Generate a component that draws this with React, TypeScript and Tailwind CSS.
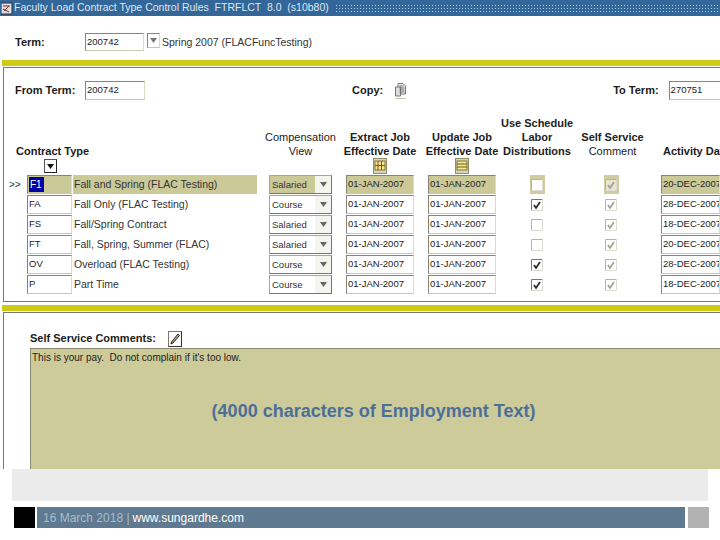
const rows = [
  { code: 'F1', desc: 'Fall and Spring (FLAC Testing)', view: 'Salaried', labor: false, activity: '20-DEC-2007' },
  { code: 'FA', desc: 'Fall Only (FLAC Testing)', view: 'Course', labor: true, activity: '28-DEC-2007' },
  { code: 'FS', desc: 'Fall/Spring Contract', view: 'Salaried', labor: false, activity: '18-DEC-2007' },
  { code: 'FT', desc: 'Fall, Spring, Summer (FLAC)', view: 'Salaried', labor: false, activity: '20-DEC-2007' },
  { code: 'OV', desc: 'Overload (FLAC Testing)', view: 'Course', labor: true, activity: '28-DEC-2007' },
  { code: 'P', desc: 'Part Time', view: 'Course', labor: true, activity: '18-DEC-2007' },
];

const gridCols = 'grid grid-cols-[23px_45px_197px_77px_82px_82px_54px_94px_62px]';
const bevel = 'border border-t-[#85857a] border-l-[#85857a] border-r-[#dddbc4] border-b-[#c9c7ac]';

const Triangle = ({ className }: { className: string }) => (
  <svg width="7" height="5" viewBox="0 0 7 5" className={className}>
    <path d="M0 0h7L3.5 5z" fill="currentColor" />
  </svg>
);

const Field = ({ value, className }: { value: string; className: string }) => (
  <div className={`flex shrink-0 items-center overflow-hidden whitespace-nowrap bg-white pl-px text-[9.5px] text-[#222] ${bevel} ${className}`}>{value}</div>
);

const CalendarIcon = ({ lined }: { lined?: boolean }) => (
  <svg width="14" height="16" viewBox="0 0 14 16">
    <rect x="0.5" y="0.5" width="13" height="15" fill="#d8d6b4" stroke="#8f8d6a" />
    <rect x="2" y="3" width="10" height="9" fill="#f4e58a" stroke="#6b5a20" strokeWidth="0.8" />
    {lined ? (
      <path d="M2 6h10M2 9h10" stroke="#6b5a20" />
    ) : (
      <path d="M5 3v9M8.500 3v9M2 7.500h10" stroke="#b23a20" />
    )}
  </svg>
);

const CheckBox = ({ checked, disabled, active }: { checked: boolean; disabled?: boolean; active?: boolean }) => (
  <div className={`flex h-full w-[15px] items-center justify-center ${active ? 'bg-[#cfcd9f]' : ''}`}>
    <svg width="12" height="12" viewBox="0 0 12 12">
      <path d="M0.500 11.500V0.500H11.500" fill="none" stroke={disabled || !checked ? '#b4b4a8' : '#77776c'} />
      <path d="M11.500 0.500V11.500H0.500" fill="none" stroke="#dddbd0" />
      {active && <rect x="1" y="1" width="10" height="10" fill={disabled ? '#e6e5d0' : '#fff'} />}
      {checked && <path d="M3 6l2 3 4-6" fill="none" stroke={disabled ? '#a3a396' : '#2c2c2c'} strokeWidth="1.800" />}
    </svg>
  </div>
);

const Row = ({ row, active }: { row: (typeof rows)[number]; active: boolean }) => {
  const fill = active ? 'bg-[#cbc998]' : 'bg-white';
  return (
    <div className={`${gridCols} h-[19px] grid-rows-[19px] items-stretch`}>
      <div className="pl-[5px] text-[10px] leading-[19px] text-[#333]">{active ? '>>' : ''}</div>
      {active ? (
        <div className={`flex items-center pl-px text-[10px] ${bevel} ${fill}`}>
          <span className="bg-[#0000a8] pl-px pr-[2px] text-white">{row.code}</span>
        </div>
      ) : (
        <Field value={row.code} className="" />
      )}
      <div className={`ml-px mr-[12px] whitespace-nowrap pl-px text-[10.5px] leading-[19px] text-[#333] ${active ? 'bg-[#cbc998]' : ''}`}>{row.desc}</div>
      <div className={`flex w-[63px] items-stretch border border-[#77776c] border-t-[#a5a598] border-l-[#a5a598] ${fill}`}>
        <span className="flex-1 pl-[2px] text-[9.5px] leading-[17px] text-[#333]">{row.view}</span>
        <span className="flex w-[16px] items-center justify-center bg-[#f5f5ef] text-[#666]">
          <Triangle className="" />
        </span>
      </div>
      <Field value="01-JAN-2007" className={`w-[68px] ${active ? 'bg-[#cbc998]!' : ''}`} />
      <Field value="01-JAN-2007" className={`w-[68px] ${active ? 'bg-[#cbc998]!' : ''}`} />
      <div className="flex justify-center">
        <CheckBox checked={row.labor} active={active} />
      </div>
      <div className="flex justify-center">
        <CheckBox checked disabled active={active} />
      </div>
      <Field value={row.activity} className={`ml-[3px] ${active ? 'bg-[#cbc998]!' : ''}`} />
    </div>
  );
};

const Heading = ({ lines, bold = true, icon }: { lines: string[]; bold?: boolean; icon?: React.ReactNode }) => (
  <div className="flex w-full flex-col items-center justify-end">
    {lines.map((line) => (
      <div key={line} className={`whitespace-nowrap leading-[14px] text-[#1c1c1c] ${bold ? 'font-bold' : ''}`}>
        {line}
      </div>
    ))}
    <div className="h-[17px]">{icon}</div>
  </div>
);

export default function App() {
  return (
    <div className="relative h-[540px] w-[720px] overflow-hidden bg-white font-['Liberation_Sans',sans-serif] text-[11px]">
      {/* Title bar */}
      <div className="flex h-[16px] items-center bg-[#336699] pl-px text-white">
        <svg width="12" height="14" viewBox="0 0 12 14" className="shrink-0">
          <rect x="0" y="2" width="11" height="11" fill="#d8dde6" stroke="#333" />
          <path d="M2 5h7M2 8l6 3M8 5l-5 5" stroke="#8a2b20" />
        </svg>
        <span className="ml-px shrink-0 whitespace-pre text-[10.5px] text-[#dfe8f1]">
          {'Faculty Load Contract Type Control Rules  FTRFLCT  8.0  (s10b80)'}
        </span>
        <div className="ml-[6px] h-[9px] flex-1 bg-[radial-gradient(circle,#b5cde2_0.7px,transparent_1px)] bg-size-[3px_3px]" />
      </div>

      {/* Key block */}
      <div className="flex h-[44px] items-start pl-[15px] pt-[17px]">
        <span className="w-[70px] shrink-0 font-bold leading-[18px] text-[#1c1c1c]">Term:</span>
        <Field value="200742" className="h-[18px] w-[59px]" />
        <div className={`ml-[3px] flex h-[15px] w-[13px] items-center justify-center text-[#777] ${bevel}`}>
          <Triangle className="" />
        </div>
        <span className="ml-[2px] text-[10.5px] leading-[18px] text-[#333]">Spring 2007 (FLACFuncTesting)</span>
      </div>
      <div className="ml-[2px] h-[6px] bg-[#cfcb14]" />

      {/* Rules block */}
      <div className="ml-[3px] mt-px h-[235px] border-y border-l border-[#77776c]">
        <div className="mt-[13px] flex h-[19px] items-center whitespace-nowrap pl-[11px]">
          <span className="w-[70px] shrink-0 font-bold text-[#1c1c1c]">From Term:</span>
          <Field value="200742" className="h-[19px] w-[60px]" />
          <span className="ml-[207px] font-bold text-[#1c1c1c]">Copy:</span>
          <div className="ml-[12px] flex h-[17px] w-[14px] items-center justify-center border-b border-[#c9c7ac]">
            <svg width="11" height="14" viewBox="0 0 11 14">
              <path d="M3 .5h5l2.500 2.500v8H3z" fill="#f3f3f3" stroke="#777" />
              <path d="M.5 4h5v9h-5z" fill="#ddd" stroke="#777" />
              <path d="M4.500 3h4M4.500 5h5M4.500 7h5M4.500 9h5" stroke="#666" />
            </svg>
          </div>
          <span className="ml-[207px] font-bold text-[#1c1c1c]">To Term:</span>
          <Field value="270751" className="ml-[10px] h-[19px] w-[70px]" />
        </div>

        <div className={`${gridCols} mt-[16px] h-[59px] items-end`}>
          <div className="col-span-2 flex flex-col">
            <div className="ml-[12px] whitespace-nowrap font-bold leading-[14px] text-[#1c1c1c]">Contract Type</div>
            <div className="ml-[40px] mt-px flex h-[14px] w-[13px] items-center justify-center border border-[#555] border-b-[#222] border-r-[#222] bg-white text-[#111]">
              <Triangle className="" />
            </div>
            <div className="h-[2px]" />
          </div>
          <div />
          <div className="w-[63px]"><Heading lines={['Compensation', 'View']} bold={false} /></div>
          <div className="w-[68px]"><Heading lines={['Extract Job', 'Effective Date']} icon={<CalendarIcon />} /></div>
          <div className="w-[68px]"><Heading lines={['Update Job', 'Effective Date']} icon={<CalendarIcon lined />} /></div>
          <Heading lines={['Use Schedule', 'Labor', 'Distributions']} />
          <div className="flex w-full flex-col items-center pl-[3px]">
            <div className="whitespace-nowrap font-bold leading-[14px] text-[#1c1c1c]">Self Service</div>
            <div className="whitespace-nowrap leading-[14px] text-[#1c1c1c]">Comment</div>
            <div className="h-[17px]" />
          </div>
          <div className="ml-[5px] whitespace-nowrap pb-[17px] font-bold leading-[14px] text-[#1c1c1c]">Activity Date</div>
        </div>

        <div className="flex flex-col gap-px">
          {rows.map((row, i) => (
            <Row key={row.code} row={row} active={i === 0} />
          ))}
        </div>
      </div>

      {/* Comments block */}
      <div className="ml-[2px] mt-[3px] h-[6px] bg-[#cfcb14]" />
      <div className="ml-[3px] mt-px h-[157px] border-l border-t border-[#77776c] pl-[26px]">
        <div className="flex h-[35px] items-end pb-[1px]">
          <span className="mb-px font-bold text-[#1c1c1c]">Self Service Comments:</span>
          <div className="ml-[12px] flex h-[16px] w-[14px] items-center justify-center border border-[#777] border-b-[#333] border-r-[#333]">
            <svg width="10" height="12" viewBox="0 0 10 12">
              <path d="M8 1l1.500 1.500L3 10l-2 1 .5-2z" fill="#c9a878" stroke="#222" />
            </svg>
          </div>
        </div>
        <div className="flex h-[121px] flex-col border-l border-t border-[#8a8870] bg-[#cdcb99] pl-px">
          <div className="whitespace-pre text-[10px] leading-[18px] text-[#222]">This is your pay.  Do not complain if it's too low.</div>
          <div className="mt-[31px] pr-[5px] text-center text-[18px] font-bold text-[#4c6f9a]">
            (4000 characters of Employment Text)
          </div>
        </div>
      </div>

      {/* Slide footer */}
      <div className="ml-[12px] h-[32px] w-[696px] bg-[#ecebeb]" />
      <div className="ml-[14px] mt-[6px] flex h-[21px] gap-[2px]">
        <div className="w-[21px] bg-black" />
        <div className="flex w-[648px] items-center bg-[#5f7a90] pl-[6px] text-[12px]">
          <span className="text-[#a9bccb]">16 March 2018 | </span>
          <span className="ml-[3px] text-white">www.sungardhe.com</span>
        </div>
        <div className="ml-px w-[21px] bg-[#b2b2b2]" />
      </div>
    </div>
  );
}
